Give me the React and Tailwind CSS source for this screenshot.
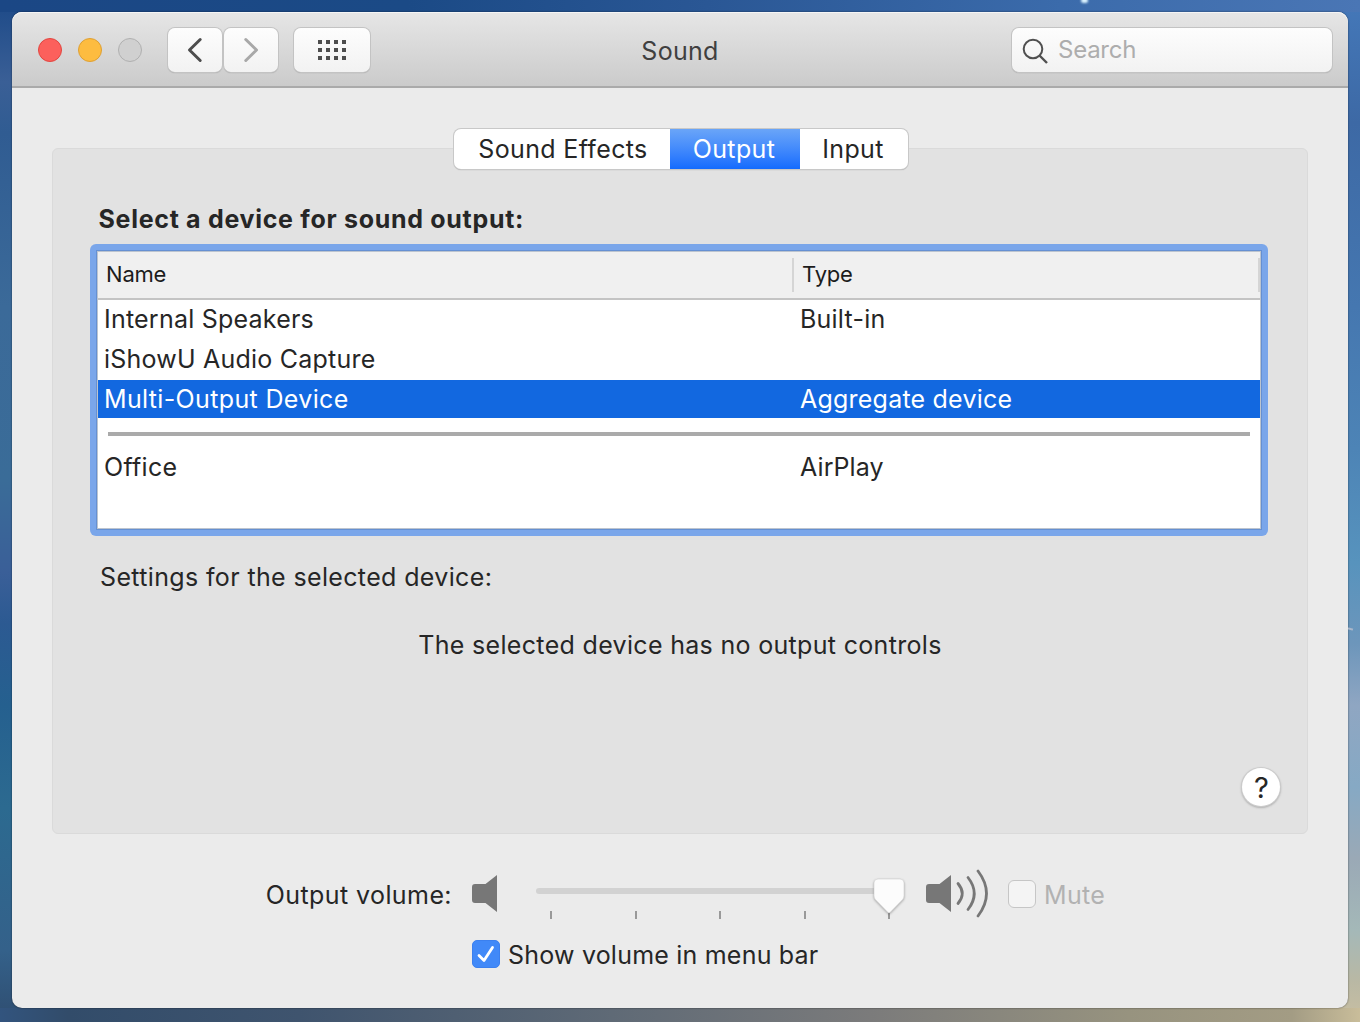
const devices = [
  { name: "Internal Speakers", type: "Built-in", spacing: "tracking-[0.22px]" },
  { name: "iShowU Audio Capture", type: "", spacing: "tracking-[0.22px]" },
  { name: "Multi-Output Device", type: "Aggregate device", spacing: "tracking-[0.35px]", selected: true },
];

function SpeakerBody() {
  return <path d="M3 9H13.500L25 0V37L13.500 28H3Q0 28 0 25V12Q0 9 3 9Z" fill="#777777" />;
}

function TitleBar() {
  const button =
    "h-[44px] rounded-[7px] bg-linear-to-b from-[#fdfdfd] to-[#f2f2f2] shadow-[0_0_0_1px_#c3c3c3,0_1px_1px_0_#8f8f8f] flex items-center justify-center";
  return (
    <header className="grid h-[76px] grid-cols-[1fr_auto_1fr] items-center rounded-t-[10px] border-b-2 border-[#aaaaaa] bg-linear-to-b from-[#e6e6e6] to-[#cbcbcb] pt-[2px] pr-4 pl-[26px] shadow-[inset_0_1px_0_#f5f5f5]">
      <div className="flex items-center">
        <div className="flex gap-4">
          <span className="size-6 rounded-full border border-[#e24640] bg-[#fc605c]" />
          <span className="size-6 rounded-full border border-[#dea034] bg-[#fdbc40]" />
          <span className="size-6 rounded-full border border-[#b0b0b0] bg-[#d0d0d0]" />
        </div>
        <div className="ml-[26px] flex gap-[2px]">
          <button className={`${button} w-[54px]`}>
            <svg width="18" height="28" viewBox="0 0 18 28" fill="none" stroke="#4d4d4d" strokeWidth="3" strokeLinecap="round" strokeLinejoin="round">
              <path d="M14.200 3.500L3.500 14L14.200 24.500" />
            </svg>
          </button>
          <button className={`${button} w-[54px]`}>
            <svg width="18" height="28" viewBox="0 0 18 28" fill="none" stroke="#a8a8a8" strokeWidth="3" strokeLinecap="round" strokeLinejoin="round">
              <path d="M3.800 3.500L14.500 14L3.800 24.500" />
            </svg>
          </button>
        </div>
        <button className={`${button} ml-4 w-[76px]`}>
          <span className="grid grid-cols-4 gap-1">
            {Array.from({ length: 12 }, (_, i) => (
              <span key={i} className="size-1 bg-[#4d4d4d]" />
            ))}
          </span>
        </button>
      </div>
      <h1 className="mr-[10px] pt-[4px] text-[25px] tracking-[0.3px] text-[#404040]">Sound</h1>
      <div className="flex h-[44px] w-[320px] items-center justify-self-end rounded-[7px] bg-linear-to-b from-[#fdfdfd] to-[#f2f2f2] pl-[10px] shadow-[0_0_0_1px_#c3c3c3,0_1px_1px_0_#8f8f8f]">
        <svg className="mt-[2px]" width="28" height="28" viewBox="0 0 28 28" fill="none" stroke="#505050" strokeWidth="2">
          <circle cx="11" cy="12" r="9.300" />
          <path d="M17.500 18.500L25 26" strokeWidth="2.400" />
        </svg>
        <span className="ml-[8px] text-[24px] tracking-[-0.25px] text-[#adadad]">Search</span>
      </div>
    </header>
  );
}

function Tabs() {
  return (
    <div className="relative -mt-[20px] ml-[401px] flex h-[40px] w-[454px] rounded-[7px] bg-white text-[25px] tracking-[0.35px] shadow-[0_0_0_1px_#c8c8c8,0_1px_1px_0_#999]">
      <span className="flex w-[216px] items-center justify-center pt-[2px] pl-[2px]">Sound Effects</span>
      <span className="flex w-[130px] items-center justify-center bg-linear-to-b from-[#6aa5f8] to-[#126bfe] pt-[2px] pr-[2px] text-white">Output</span>
      <span className="flex w-[108px] items-center justify-center pt-[2px] pr-[2px]">Input</span>
    </div>
  );
}

function DeviceTable() {
  return (
    <div className="mt-[5px] mr-[39px] ml-[37px] h-[292px] rounded-[6px] bg-[#7aa6ea] p-[6px]">
      <div className="h-full border border-[#6590d2]">
        <div className="flex h-full flex-col border border-[#bcc4cf] bg-white text-[25px]">
          <div className="flex h-[48px] shrink-0 items-center border-b-2 border-[#c4c4c4] bg-[#f0f0f0] text-[22px] tracking-[-0.2px] text-[#1c1c1c]">
            <span className="w-[694px] pb-[2px] pl-[8px]">Name</span>
            <span className="flex h-[34px] flex-1 items-center border-x-2 border-[#d5d5d5] pb-[2px] pl-[8px]">Type</span>
          </div>
          <div className="flex flex-col gap-[2px]">
            {devices.map((d) => (
              <div
                key={d.name}
                className={`flex h-[38px] items-center pt-[2px] ${d.spacing} ${d.selected ? "bg-[#1268e0] text-white" : ""}`}
              >
                <span className="w-[696px] pl-[6px]">{d.name}</span>
                <span className="pl-[6px] tracking-[0.22px]">{d.type}</span>
              </div>
            ))}
          </div>
          <div className="mx-[10px] mt-[14px] h-1 shrink-0 bg-[#aaaaaa]" />
          <div className="mt-[12px] flex h-[38px] items-center pt-[2px]">
            <span className="w-[696px] pl-[6px] tracking-[0.3px]">Office</span>
            <span className="pl-[6px] tracking-[0.1px]">AirPlay</span>
          </div>
        </div>
      </div>
    </div>
  );
}

function VolumeControls() {
  return (
    <footer className="text-[25px]">
      <div className="mt-[34px] flex h-[54px] items-center">
        <span className="w-[440px] pt-[2px] text-right tracking-[0.42px]">Output volume:</span>
        <svg className="mb-[3px] ml-[20px] shrink-0" width="26" height="37" viewBox="0 0 26 37">
          <SpeakerBody />
        </svg>
        <div className="relative ml-[38px] h-[54px] w-[370px] shrink-0">
          <div className="mt-[20px] mr-[16px] h-[6px] rounded-full bg-[#d2d2d2]" />
          <div className="mt-[17px] mr-[16px] ml-[14px] flex justify-between">
            {[0, 1, 2, 3, 4].map((n) => (
              <span key={n} className="h-2 w-[2px] bg-[#999999]" />
            ))}
          </div>
          <svg className="absolute top-[8px] right-[-2px] drop-shadow-[0_1px_1px_rgba(0,0,0,0.3)]" width="38" height="42" viewBox="0 0 38 42">
            <path d="M8 3H30Q34 3 34 7V20Q34 22 32.500 23.700L20 36.500Q19 37.500 18 36.500L5.500 23.700Q4 22 4 20V7Q4 3 8 3Z" fill="#fcfcfc" stroke="#d0d0d0" strokeWidth="0.600" />
          </svg>
        </div>
        <svg className="mb-[2px] ml-[20px] shrink-0" width="64" height="50" viewBox="0 0 64 50">
          <g transform="translate(0 6)">
            <SpeakerBody />
          </g>
          <g fill="none" stroke="#777777" strokeWidth="2.800" strokeLinecap="round">
            <path d="M32 14.500Q40.500 24.500 32 34.500" />
            <path d="M42 8.500Q54.500 24.500 42 40.500" />
            <path d="M52 2Q69 24.500 52 47" />
          </g>
        </svg>
        <span className="mb-[2px] ml-[18px] size-[28px] shrink-0 rounded-[6px] border border-[#c6c6c6] bg-[#f4f4f4]" />
        <span className="ml-[8px] pt-[2px] tracking-[0.3px] text-[#b2b2b2]">Mute</span>
      </div>
      <div className="mt-[17px] ml-[460px] flex h-[30px] items-center">
        <span className="flex size-[28px] items-center justify-center rounded-[5px] border border-[#3b80ef] bg-[#4189f8]">
          <svg width="20" height="20" viewBox="0 0 20 20" fill="none" stroke="white" strokeWidth="2.800" strokeLinecap="round" strokeLinejoin="round">
            <path d="M3 11.500L8 16.500L16.500 3.500" />
          </svg>
        </span>
        <span className="ml-[8px] pt-[4px] tracking-[0.21px]">Show volume in menu bar</span>
      </div>
    </footer>
  );
}

function Desktop({ children }) {
  return (
    <div className="relative h-[1022px] w-[1360px] overflow-hidden bg-[linear-gradient(to_right,#1b4785,#1b4a86_30%,#2a5795_52%,#3b6bab_78%,#4a76b5),linear-gradient(to_right,#32547e,#324c6a_5%,#3f546e_22%,#5f6a76_45%,#7b7b7b_64%,#97937f_83%,#a39c84_95%,#c9bd9a),linear-gradient(to_bottom,#1d4a88,#3a5f96_8%,#305c92_13%,#3b6a99_30%,#3a6c98_47%,#3a5f98_56%,#2c5a92_61%,#25608f_69%,#2c6a90_79%,#34618a_93%,#2f4d70),linear-gradient(to_bottom,#4478b9,#3d69a5_12%,#4577b0_30%,#4d84b6_44%,#5793bd_55%,#6d96bb_63%,#8fa6c2_69%,#86a9c4_77%,#9aa9b6_84%,#a4b8b8_91%,#b9b8a4_96%,#c9bfa2)] bg-[length:100%_12px,100%_14px,50%_100%,50%_100%] bg-[position:top,bottom,left,right] bg-no-repeat p-3 font-['Inter',sans-serif] text-[#262626]">
      <span className="absolute -top-[2px] left-[1081px] h-[5px] w-[7px] rounded-full bg-[#dcf4ff] blur-[1px]" />
      <span className="absolute top-[628px] left-[1348px] h-[2px] w-[5px] rotate-[15deg] bg-[#a9b6c9] blur-[0.5px]" />
      {children}
    </div>
  );
}

export default function App() {
  return (
    <Desktop>
      <main className="h-[996px] w-[1336px] rounded-[10px] bg-[#ebebeb] shadow-[0_0_2px_rgba(0,0,0,0.6)]">
        <TitleBar />
        <section className="mx-[40px] mt-[60px] h-[686px] rounded-[6px] border border-[#dadada] bg-[#e2e2e2]">
          <Tabs />
          <h2 className="mt-[30px] ml-[45.5px] h-[40px] text-[25px] leading-[40px] font-bold tracking-[0.7px]">Select a device for sound output:</h2>
          <DeviceTable />
          <p className="mt-[21px] ml-[47px] h-[40px] text-[25px] leading-[40px] tracking-[0.36px]">Settings for the selected device:</p>
          <p className="mt-[28px] h-[40px] text-center text-[25px] leading-[40px] tracking-[0.32px]">The selected device has no output controls</p>
          <button className="mt-[103px] mr-[27px] ml-auto flex size-[38px] items-center justify-center rounded-full bg-white pt-px pl-px text-[29px] shadow-[0_0_0_1px_#cccccc,0_1px_2px_1px_#b0b0b0]">?</button>
        </section>
        <VolumeControls />
      </main>
    </Desktop>
  );
}
